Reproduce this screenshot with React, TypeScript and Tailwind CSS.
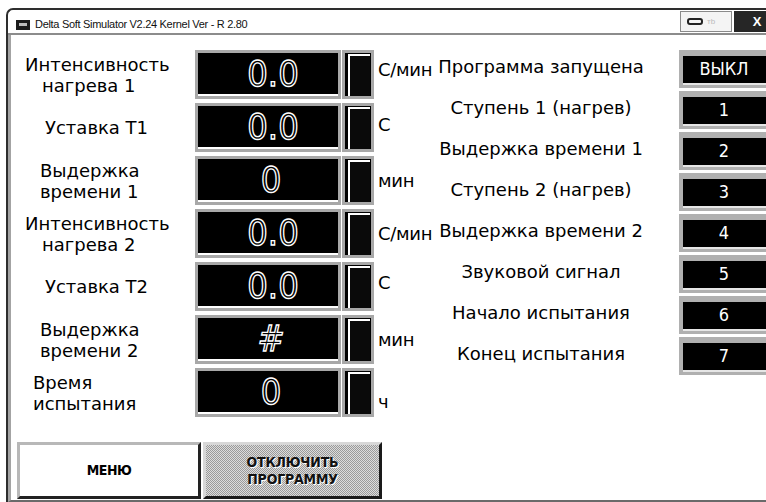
import React from "react";

type Line = { text: string; cls: string };

type Row = {
  lines: Line[];
  value: string;
  valueCls: string;
  unit: string;
  unitCls: string;
};

const rows: Row[] = [
  {
    lines: [
      { text: "Интенсивность", cls: "pl-[14px]" },
      { text: "нагрева 1", cls: "pl-[31px]" },
    ],
    value: "0.0",
    valueCls: "pl-[10px]",
    unit: "С/мин",
    unitCls: "-mt-[10px]",
  },
  {
    lines: [{ text: "Уставка Т1", cls: "pl-[34px]" }],
    value: "0.0",
    valueCls: "pl-[10px]",
    unit: "С",
    unitCls: "-mt-[6px]",
  },
  {
    lines: [
      { text: "Выдержка", cls: "pl-[29px]" },
      { text: "времени 1", cls: "pl-[29px]" },
    ],
    value: "0",
    valueCls: "pl-[6px]",
    unit: "мин",
    unitCls: "mt-0",
  },
  {
    lines: [
      { text: "Интенсивность", cls: "pl-[14px]" },
      { text: "нагрева 2", cls: "pl-[31px]" },
    ],
    value: "0.0",
    valueCls: "pl-[10px]",
    unit: "С/мин",
    unitCls: "mt-0",
  },
  {
    lines: [{ text: "Уставка Т2", cls: "pl-[34px]" }],
    value: "0.0",
    valueCls: "pl-[10px]",
    unit: "С",
    unitCls: "-mt-[8px]",
  },
  {
    lines: [
      { text: "Выдержка", cls: "pl-[29px]" },
      { text: "времени 2", cls: "pl-[29px]" },
    ],
    value: "#",
    valueCls: "pl-[6px] italic",
    unit: "мин",
    unitCls: "mt-0",
  },
  {
    lines: [
      { text: "Время", cls: "pl-[22px]" },
      { text: "испытания", cls: "pl-[22px]" },
    ],
    value: "0",
    valueCls: "pl-[6px]",
    unit: "ч",
    unitCls: "mt-[18px]",
  },
];

const steps = [
  { label: "Программа запущена", value: "ВЫКЛ" },
  { label: "Ступень 1 (нагрев)", value: "1" },
  { label: "Выдержка времени 1", value: "2" },
  { label: "Ступень 2 (нагрев)", value: "3" },
  { label: "Выдержка времени 2", value: "4" },
  { label: "Звуковой сигнал", value: "5" },
  { label: "Начало испытания", value: "6" },
  { label: "Конец испытания", value: "7" },
];

function TitleBar() {
  return (
    <div className="h-[25px] shrink-0 flex items-center border-b-2 border-[#8c8c8c] pt-[6px]">
      <div className="ml-[8px] w-[14px] h-[10px] bg-[#1c1c1c] flex items-center justify-center">
        <div className="w-[8px] h-[3px] bg-[#bdbdbd]" />
      </div>
      <span className="ml-[5px] text-[11px] tracking-[-0.3px] font-['Liberation_Sans',sans-serif] text-[#111]">
        Delta Soft Simulator V2.24 Kernel Ver - R 2.80
      </span>
      <div className="ml-auto flex items-stretch h-[21px] -mt-[6px] shrink-0">
        <div className="w-[52px] border border-[#8a8a8a] bg-[#f4f4f4] flex items-center pl-[6px] gap-[4px]">
          <div className="w-[16px] h-[7px] border-2 border-[#222] rounded-[3px]" />
          <span className="text-[8px] text-[#bbb] font-['Liberation_Sans',sans-serif]">тb</span>
        </div>
        <div className="ml-[2px] w-[46px] bg-[#262626] flex items-center justify-center">
          <span className="text-white text-[13px] font-bold font-['Liberation_Sans',sans-serif]">X</span>
        </div>
      </div>
    </div>
  );
}

function Display({ value, cls }: { value: string; cls: string }) {
  return (
    <div className="w-[146px] h-[49px] shrink-0 bg-[#a8a8a8] p-[3px]">
      <div className="h-full bg-black border-b-2 border-white flex items-center justify-center">
        <span
          className={`font-['DejaVu_Sans_Condensed',sans-serif] text-[36px] leading-none text-transparent [-webkit-text-stroke:1.3px_white] ${cls}`}
        >
          {value}
        </span>
      </div>
    </div>
  );
}

function Indicator() {
  return (
    <div className="w-[32px] h-[49px] shrink-0 bg-[#a8a8a8] p-[3px]">
      <div className="h-full bg-black pl-[3px] pt-[1px] pr-[1px]">
        <div className="h-full border-l-2 border-t-2 border-white bg-[#0a0a0a]" />
      </div>
    </div>
  );
}

function StepBox({ value }: { value: string }) {
  return (
    <div className="w-[92px] h-[38px] shrink-0 bg-[#b0b0b0] pt-[6px] pl-[4px] pb-[3px]">
      <div className="h-full bg-black border-b-2 border-[#e6e6e6] flex items-center">
        <span className="text-white text-[18px] leading-none font-['DejaVu_Sans_Condensed',sans-serif] w-[82px] text-center">
          {value}
        </span>
      </div>
    </div>
  );
}

export default function App() {
  return (
    <div className="w-[766px] h-[502px] bg-white overflow-hidden font-['DejaVu_Sans',sans-serif] text-black">
      <div className="ml-[6px] mt-[8px] w-[774px] h-[494px] border-l-2 border-t-2 border-[#2e2e2e] rounded-tl-[7px] flex flex-col">
        <TitleBar />

        <div className="flex-1 flex flex-col border-l-[3px] border-[#a3a3a3] border-b-2 border-b-[#6a6a6a]">
          <div className="flex">
            {/* left: setpoints */}
            <div className="w-[419px] shrink-0 pt-[15px]">
              {rows.map((r, i) => (
                <div key={i} className="h-[53px] flex items-start">
                  <div className="w-[183px] shrink-0 h-[49px] flex flex-col justify-center text-[18px] leading-[21px]">
                    {r.lines.map((l) => (
                      <span key={l.text} className={l.cls}>
                        {l.text}
                      </span>
                    ))}
                  </div>
                  <div className="ml-px shrink-0">
                    <Display value={r.value} cls={r.valueCls} />
                  </div>
                  <div className="ml-px shrink-0">
                    <Indicator />
                  </div>
                  <div className="h-[49px] shrink-0 flex items-center pl-[4px]">
                    <span className={`text-[18px] leading-none whitespace-nowrap tracking-[-0.3px] ${r.unitCls}`}>
                      {r.unit}
                    </span>
                  </div>
                </div>
              ))}
            </div>

            {/* right: program steps */}
            <div className="shrink-0 pt-[13px]">
              {steps.map((s) => (
                <div key={s.value} className="h-[41px] flex items-center">
                  <div className="w-[222px] shrink-0 text-center text-[18px] leading-none whitespace-nowrap -mt-[3px]">
                    {s.label}
                  </div>
                  <div className="ml-[27px] shrink-0">
                    <StepBox value={s.value} />
                  </div>
                </div>
              ))}
            </div>
          </div>

          <div className="mt-auto mb-[1px] flex ml-[6px] h-[57px]">
            <button className="w-[184px] h-full bg-white border-t-[3px] border-l-[3px] border-[#b8b8b8] border-r-[3px] border-r-[#222] border-b-[3px] border-b-[#222] flex items-center justify-center">
              <span className="font-['DejaVu_Sans_Condensed',sans-serif] font-bold text-[14px] tracking-[-0.5px]">МЕНЮ</span>
            </button>
            <button className="ml-[2px] w-[179px] h-full bg-[repeating-conic-gradient(#9a9a9a_0_25%,#dcdcdc_0_50%)] bg-[length:2px_2px] border-t-[3px] border-l-[3px] border-[#d8d8d8] border-r-[3px] border-r-[#1a1a1a] border-b-[3px] border-b-[#1a1a1a] flex flex-col items-center justify-center">
              <span className="font-['DejaVu_Sans_Condensed',sans-serif] font-bold text-[14px] leading-[17px] tracking-[-0.2px] text-[#111] [text-shadow:1px_1px_0_#fff]">
                ОТКЛЮЧИТЬ
              </span>
              <span className="font-['DejaVu_Sans_Condensed',sans-serif] font-bold text-[14px] leading-[17px] tracking-[-0.2px] text-[#111] [text-shadow:1px_1px_0_#fff]">
                ПРОГРАММУ
              </span>
            </button>
          </div>
        </div>
      </div>
    </div>
  );
}
